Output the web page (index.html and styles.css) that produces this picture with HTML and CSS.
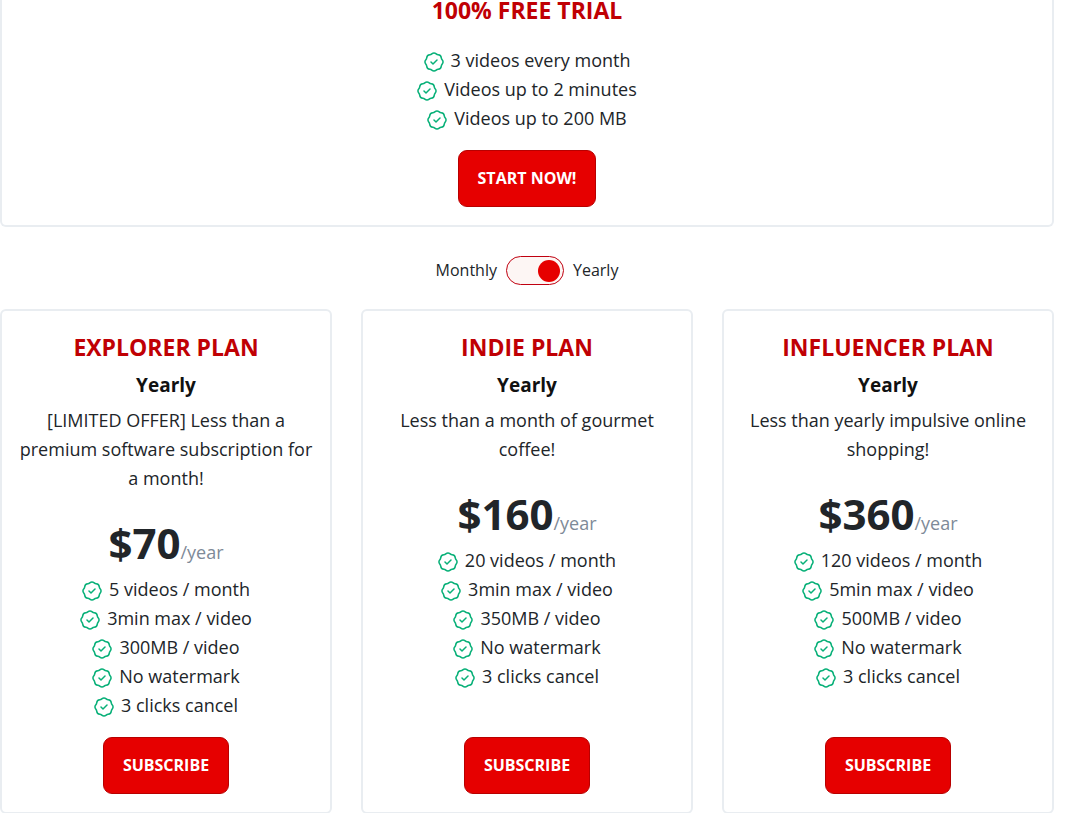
FILE: index.html
```
<!DOCTYPE html>
<html lang="en">
<head>
  <meta charset="UTF-8">
  <meta name="viewport" content="width=device-width, initial-scale=1">
  <title>Pricing</title>
  <link rel="stylesheet" href="styles.css">
</head>
<body>

<!-- Check icon used by every feature -->
<svg class="sprite" aria-hidden="true">
  <symbol id="check" viewBox="2 2 20 20">
    <path d="M9 12l2 2 4-4M7.835 4.697a3.42 3.42 0 0 0 1.946-.806 3.42 3.42 0 0 1 4.438 0 3.42 3.42 0 0 0 1.946.806 3.42 3.42 0 0 1 3.138 3.138 3.42 3.42 0 0 0 .806 1.946 3.42 3.42 0 0 1 0 4.438 3.42 3.42 0 0 0-.806 1.946 3.42 3.42 0 0 1-3.138 3.138 3.42 3.42 0 0 0-1.946.806 3.42 3.42 0 0 1-4.438 0 3.42 3.42 0 0 0-1.946-.806 3.42 3.42 0 0 1-3.138-3.138 3.42 3.42 0 0 0-.806-1.946 3.42 3.42 0 0 1 0-4.438 3.42 3.42 0 0 0 .806-1.946 3.42 3.42 0 0 1 3.138-3.138z"/>
  </symbol>
</svg>

<main>
  <section class="card trial">
    <h2>100% FREE TRIAL</h2>
    <ul class="features">
      <li><svg><use href="#check"/></svg>3 videos every month</li>
      <li><svg><use href="#check"/></svg>Videos up to 2 minutes</li>
      <li><svg><use href="#check"/></svg>Videos up to 200 MB</li>
    </ul>
    <button type="button" class="btn">START NOW!</button>
  </section>

  <div class="billing">
    <span>Monthly</span>
    <input type="checkbox" role="switch" id="period" class="switch" checked>
    <label for="period">Yearly</label>
  </div>

  <div class="plans">
    <section class="card">
      <h2>EXPLORER PLAN</h2>
      <h3>Yearly</h3>
      <p class="desc">[LIMITED OFFER] Less than a premium software subscription for a month!</p>
      <p class="price"><strong>$70</strong><span>/year</span></p>
      <ul class="features">
        <li><svg><use href="#check"/></svg>5 videos / month</li>
        <li><svg><use href="#check"/></svg>3min max / video</li>
        <li><svg><use href="#check"/></svg>300MB / video</li>
        <li><svg><use href="#check"/></svg>No watermark</li>
        <li><svg><use href="#check"/></svg>3 clicks cancel</li>
      </ul>
      <button type="button" class="btn">SUBSCRIBE</button>
    </section>

    <section class="card">
      <h2>INDIE PLAN</h2>
      <h3>Yearly</h3>
      <p class="desc">Less than a month of gourmet coffee!</p>
      <p class="price"><strong>$160</strong><span>/year</span></p>
      <ul class="features">
        <li><svg><use href="#check"/></svg>20 videos / month</li>
        <li><svg><use href="#check"/></svg>3min max / video</li>
        <li><svg><use href="#check"/></svg>350MB / video</li>
        <li><svg><use href="#check"/></svg>No watermark</li>
        <li><svg><use href="#check"/></svg>3 clicks cancel</li>
      </ul>
      <button type="button" class="btn">SUBSCRIBE</button>
    </section>

    <section class="card">
      <h2>INFLUENCER PLAN</h2>
      <h3>Yearly</h3>
      <p class="desc">Less than yearly impulsive online shopping!</p>
      <p class="price"><strong>$360</strong><span>/year</span></p>
      <ul class="features">
        <li><svg><use href="#check"/></svg>120 videos / month</li>
        <li><svg><use href="#check"/></svg>5min max / video</li>
        <li><svg><use href="#check"/></svg>500MB / video</li>
        <li><svg><use href="#check"/></svg>No watermark</li>
        <li><svg><use href="#check"/></svg>3 clicks cancel</li>
      </ul>
      <button type="button" class="btn">SUBSCRIBE</button>
    </section>
  </div>
</main>

</body>
</html>
```
FILE: styles.css
```
/* Reset */
* {
  margin: 0; padding: 0; box-sizing: border-box;
}

body {
  background: #fff;
  color: #212529;
  font-family: "Segoe UI", "Open Sans", "Noto Sans", sans-serif;
  font-size: 18px;
  line-height: 29px;
}

.sprite {
  display: none;
}

main {
  padding-right: 16px;
}

/* Cards */
.card {
  display: flex;
  flex-direction: column;
  align-items: center;
  padding: 18px 16px;
  border: 2px solid #e9edf1;
  border-radius: 6px;
  text-align: center;
}

.card h2 {
  color: #c00004;
  font-size: 23px;
  font-weight: 700;
  line-height: 36px;
}

.card h3 {
  margin: 4px 0 5px;
  color: #111;
  font-size: 19px;
  font-weight: 700;
  line-height: 32px;
}

.trial {
  padding-top: 0;
  border-top: none;
  border-radius: 0 0 6px 6px;
}

.trial h2 {
  margin-bottom: 26px;
  line-height: 20px;
}

/* Price */
.price {
  margin-top: 27px;
  line-height: 46px;
}

.price strong {
  font-size: 42px;
  font-weight: 700;
}

.price span {
  color: #7e8a98;
}

/* Features */
.features {
  list-style: none;
  margin-bottom: 17px;
}

.features li {
  display: flex;
  align-items: center;
  justify-content: center;
  gap: 7px;
}

.features svg {
  flex: none;
  width: 20px;
  height: 20px;
  margin-top: 2px;
  fill: none;
  stroke: #08b078;
  stroke-width: 1.5;
  stroke-linecap: round;
  stroke-linejoin: round;
}

/* Buttons */
.btn {
  margin-top: auto;
  padding: 0 19px;
  height: 57px;
  background: #e60000;
  border: 1px solid #b80000;
  border-radius: 9px;
  color: #fff;
  font: inherit;
  font-size: 16px;
  font-weight: 700;
  cursor: pointer;
}

/* Monthly / yearly switch */
.billing {
  display: flex;
  align-items: center;
  justify-content: center;
  gap: 9px;
  padding: 29px 0 24px;
  font-size: 16px;
}

.switch {
  display: flex;
  align-items: center;
  appearance: none;
  width: 58px;
  height: 29px;
  padding: 0 3px;
  background: #fdf6f4;
  border: 1px solid #c00010;
  border-radius: 15px;
  cursor: pointer;
}

.switch::before {
  content: "";
  width: 22px;
  height: 22px;
  border-radius: 50%;
  background: #e60000;
}

.switch:checked {
  justify-content: flex-end;
}

/* Plans */
.plans {
  display: grid;
  grid-template-columns: repeat(3, 1fr);
  gap: 29px;
}

/* Responsive */
@media (max-width: 800px) {
  .plans {
    grid-template-columns: 1fr;
  }
}
```
